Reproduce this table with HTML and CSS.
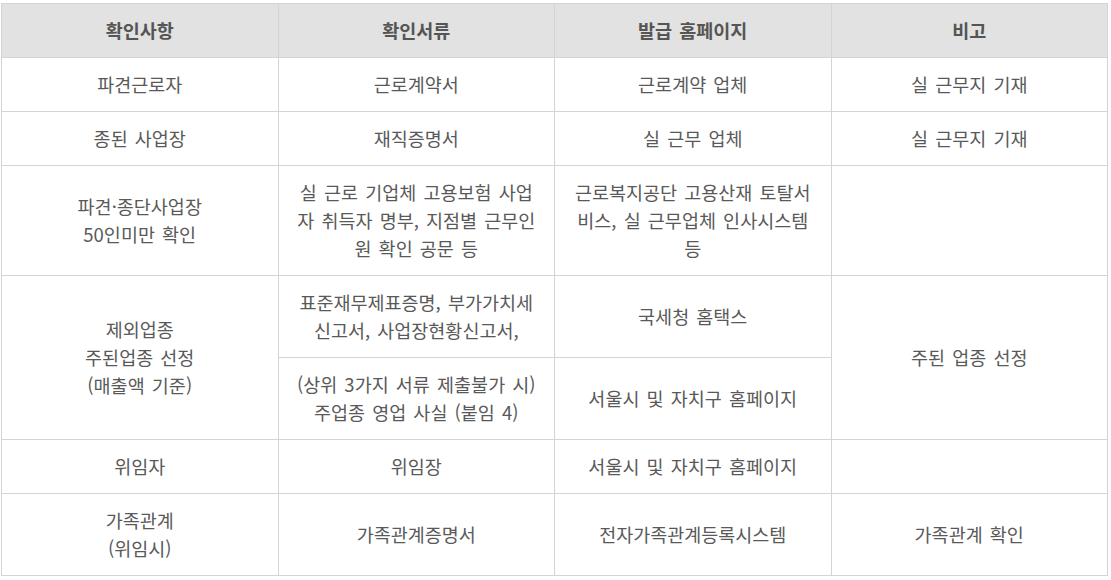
FILE: index.html
```html
<!DOCTYPE html>
<html lang="ko">
<head>
<meta charset="utf-8">
<title>확인서류</title>
<link rel="stylesheet" href="styles.css">
</head>
<body>
<table class="doc-table">
  <colgroup>
    <col class="c"><col class="c"><col class="c"><col class="c">
  </colgroup>
  <thead>
    <tr>
      <th>확인사항</th>
      <th>확인서류</th>
      <th>발급 홈페이지</th>
      <th>비고</th>
    </tr>
  </thead>
  <tbody>
    <tr>
      <td>파견근로자</td>
      <td>근로계약서</td>
      <td>근로계약 업체</td>
      <td>실 근무지 기재</td>
    </tr>
    <tr>
      <td>종된 사업장</td>
      <td>재직증명서</td>
      <td>실 근무 업체</td>
      <td>실 근무지 기재</td>
    </tr>
    <tr>
      <td>파견·종단사업장<br>50인미만 확인</td>
      <td>실 근로 기업체 고용보험 사업<br>자 취득자 명부, 지점별 근무인<br>원 확인 공문 등</td>
      <td>근로복지공단 고용산재 토탈서<br>비스, 실 근무업체 인사시스템<br>등</td>
      <td></td>
    </tr>
    <tr>
      <td rowspan="2">제외업종<br>주된업종 선정<br>(매출액 기준)</td>
      <td>표준재무제표증명, 부가가치세<br>신고서, 사업장현황신고서,</td>
      <td>국세청 홈택스</td>
      <td rowspan="2">주된 업종 선정</td>
    </tr>
    <tr>
      <td>(상위 3가지 서류 제출불가 시)<br>주업종 영업 사실 (붙임 4)</td>
      <td>서울시 및 자치구 홈페이지</td>
    </tr>
    <tr>
      <td>위임자</td>
      <td>위임장</td>
      <td>서울시 및 자치구 홈페이지</td>
      <td></td>
    </tr>
    <tr>
      <td>가족관계<br>(위임시)</td>
      <td>가족관계증명서</td>
      <td>전자가족관계등록시스템</td>
      <td>가족관계 확인</td>
    </tr>
  </tbody>
</table>
</body>
</html>
```

FILE: styles.css
```css
html, body {
  background: #ffffff;
}
body {
  margin: 3px 0 0 1px;
  font-family: "Noto Sans CJK KR", "Noto Sans", sans-serif;
  font-size: 18.5px;
  word-spacing: 2px;
  color: #595959;
}
.doc-table {
  width: 1107px;
  border-collapse: collapse;
  table-layout: fixed;
}
.doc-table .c {
  width: 25%;
}
.doc-table th,
.doc-table td {
  border: 1px solid #d4d4d4;
  text-align: center;
  vertical-align: middle;
  line-height: 28px;
  padding: 12px 6px 13px;
  white-space: nowrap;
}
.doc-table th {
  background: #e2e2e2;
  font-weight: bold;
  color: #555555;
}
```
